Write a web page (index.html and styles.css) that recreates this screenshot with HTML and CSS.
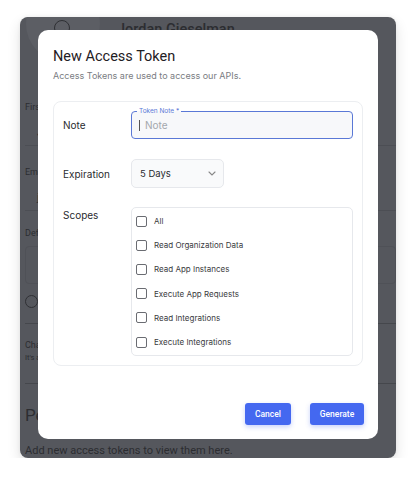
FILE: index.html
```html
<!DOCTYPE html>
<html lang="en">
<head>
  <meta charset="UTF-8">
  <meta name="viewport" content="width=device-width, initial-scale=1.0">
  <title>New Access Token</title>
  <link rel="stylesheet" href="styles.css">
</head>
<body>

  <div class="window">
    <!-- page behind the dialog, dimmed -->
    <div class="page">
      <div class="profile">
        <div class="avatar-ring"><div class="avatar"></div></div>
        <h3>Jordan Gieselman</h3>
      </div>
      <span class="field-label">First Name</span>
      <div class="field-box">Jordan</div>
      <span class="field-label next">Email</span>
      <div class="field-box">jordan@example.com</div>
      <span class="field-label org">Default Organization</span>
      <div class="field-box tall">Cascade</div>
      <span class="radio"></span>
      <div class="section">
        <p class="sec-title">Change password</p>
        <p class="sec-note">It's a good idea to use a strong password</p>
      </div>
      <div class="section last">
        <h4>Personal Access Tokens</h4>
      </div>
      <p class="empty">Add new access tokens to view them here.</p>
    </div>

    <div class="modal">
      <h2>New Access Token</h2>
      <p class="subtitle">Access Tokens are used to access our APIs.</p>

      <div class="card">
        <div class="row">
          <span class="label">Note</span>
          <div class="input">
            <span class="legend">Token Note *</span>
            <span class="caret"></span>
            <span class="placeholder">Note</span>
          </div>
        </div>

        <div class="row">
          <span class="label">Expiration</span>
          <div class="select">
            <span>5 Days</span>
            <svg width="8" height="5" viewBox="0 0 8 5"><path d="M1 1l3 3 3-3" fill="none" stroke="#888" stroke-width="1.1" stroke-linecap="round"/></svg>
          </div>
        </div>

        <div class="row top">
          <span class="label">Scopes</span>
          <div class="scopes">
            <label class="scope"><span class="box"></span>All</label>
            <label class="scope"><span class="box"></span>Read Organization Data</label>
            <label class="scope"><span class="box"></span>Read App Instances</label>
            <label class="scope"><span class="box"></span>Execute App Requests</label>
            <label class="scope"><span class="box"></span>Read Integrations</label>
            <label class="scope"><span class="box"></span>Execute Integrations</label>
          </div>
        </div>
      </div>

      <div class="actions">
        <button class="btn cancel">Cancel</button>
        <button class="btn generate">Generate</button>
      </div>
    </div>
  </div>

</body>
</html>
```

FILE: styles.css
```css
body {
  margin: 0;
  background: #fff;
  font-family: Inter, "Noto Sans", sans-serif;
}
.window {
  position: relative;
  margin: 17px 20px 0;
  width: 376px;
  height: 441px;
  border-radius: 8px;
  background: #55575d;
  box-shadow: 0 6px 14px rgba(0, 0, 0, 0.12), 0 0 4px rgba(0, 0, 0, 0.06);
  overflow: hidden;
  color: #2c2d31;
}

/* dimmed page */
.page {
  padding-left: 5px;
  font-family: Roboto, "Noto Sans", sans-serif;
}
.profile {
  position: relative;
  height: 84px;
}
.avatar-ring {
  position: absolute;
  left: 1px;
  top: -30px;
  width: 74px;
  height: 74px;
  border-radius: 50%;
  background: #5c5e64;
}
.avatar {
  position: absolute;
  left: 28px;
  top: 33px;
  width: 14px;
  height: 14px;
  border-radius: 50%;
  border: 1.5px solid #2f3034;
}
.profile h3 {
  position: relative;
  margin: 0 0 0 92px;
  padding-top: 3px;
  font-size: 14.5px;
  font-weight: 500;
  line-height: 20px;
}
.field-label {
  display: block;
  font-size: 9px;
  line-height: 12px;
}
.field-label.next {
  margin-top: 20px;
}
.field-label.org {
  margin-top: 16px;
}
.field-box {
  margin-top: 8px;
  height: 24px;
  padding-left: 12px;
  font-size: 10px;
  line-height: 24px;
  border-bottom: 1px solid #4c4e54;
}
.field-box.tall {
  margin-top: 7px;
  height: 36px;
  line-height: 36px;
  border: 1px solid #4f5157;
  border-radius: 4px;
}
.radio {
  display: block;
  margin-top: 11px;
  width: 11px;
  height: 11px;
  border: 1.5px solid #2f3034;
  border-radius: 50%;
}
.section {
  border-top: 1px solid #45474c;
  margin-top: 15px;
  padding-top: 15px;
}
.sec-title {
  margin: 0;
  font-size: 9px;
  line-height: 12px;
}
.sec-note {
  margin: 2px 0 0;
  font-size: 7.5px;
  line-height: 10px;
}
.section.last {
  margin-top: 20px;
  padding-top: 21px;
}
.section h4 {
  margin: 0;
  font-size: 17px;
  line-height: 20px;
  font-weight: 400;
}
.empty {
  margin: 19px 0 0;
  font-size: 11px;
  line-height: 14px;
}

/* dialog */
.modal {
  position: absolute;
  left: 18px;
  top: 13px;
  width: 340px;
  height: 409px;
  box-sizing: border-box;
  padding: 17px 14px 14px 15px;
  background: #fff;
  border-radius: 10px;
  display: flex;
  flex-direction: column;
  color: #222;
}
.modal h2 {
  margin: 0;
  font-family: Roboto, "Noto Sans", sans-serif;
  font-size: 14.5px;
  line-height: 20px;
  font-weight: 400;
  color: #1f2024;
}
.subtitle {
  margin: 3px 0 0;
  font-size: 9px;
  color: #7a7c82;
}
.card {
  margin-top: 20px;
  width: 310px;
  box-sizing: border-box;
  border: 1px solid #eceef1;
  border-radius: 8px;
  padding: 9px;
  display: flex;
  flex-direction: column;
  gap: 20px;
}
.row {
  display: flex;
  align-items: center;
}
.row.top {
  align-items: flex-start;
  margin-top: -1px;
}
.label {
  width: 68px;
  flex: none;
  font-size: 10px;
  color: #2a2b2f;
}
.row.top .label {
  padding-top: 2px;
}
.input {
  position: relative;
  flex: 1;
  height: 28px;
  box-sizing: border-box;
  padding-left: 7px;
  border: 1px solid #5a78d6;
  border-radius: 4px;
  background: #f7f8fa;
  display: flex;
  align-items: center;
  gap: 5px;
}
.legend {
  position: absolute;
  left: 5px;
  top: -4px;
  padding: 0 2px;
  font-size: 6.5px;
  line-height: 7px;
  color: #5a78d6;
  background: linear-gradient(#fff 50%, #f7f8fa 50%);
}
.caret {
  width: 1px;
  height: 11px;
  background: #555;
}
.placeholder {
  font-size: 10px;
  color: #a4a7ad;
}
.select {
  width: 93px;
  height: 29px;
  box-sizing: border-box;
  border: 1px solid #e6e8ec;
  border-radius: 5px;
  background: #f9fafb;
  display: flex;
  align-items: center;
  justify-content: space-between;
  padding: 0 7px 0 8px;
  font-size: 9.5px;
  color: #2a2b2f;
}
.scopes {
  flex: 1;
  box-sizing: border-box;
  border: 1px solid #e6e8ec;
  border-radius: 5px;
  padding: 1px 0;
  display: flex;
  flex-direction: column;
}
.scope {
  height: 24.2px;
  display: flex;
  align-items: center;
  gap: 7px;
  padding-left: 4px;
  font-size: 8px;
  color: #3a3b40;
}
.box {
  width: 9px;
  height: 9px;
  border: 1.5px solid #6a6c72;
  border-radius: 2px;
  flex: none;
}
.actions {
  margin-top: auto;
  display: flex;
  justify-content: flex-end;
  gap: 19px;
}
.btn {
  height: 22px;
  border: none;
  border-radius: 3px;
  background: #4468f0;
  color: #fff;
  font-family: Roboto, "Noto Sans", sans-serif;
  font-size: 8.5px;
  font-weight: 500;
  padding: 0;
  box-shadow: 0 2px 5px rgba(68, 104, 240, 0.3);
}
.cancel {
  width: 46px;
}
.generate {
  width: 54px;
}
```
